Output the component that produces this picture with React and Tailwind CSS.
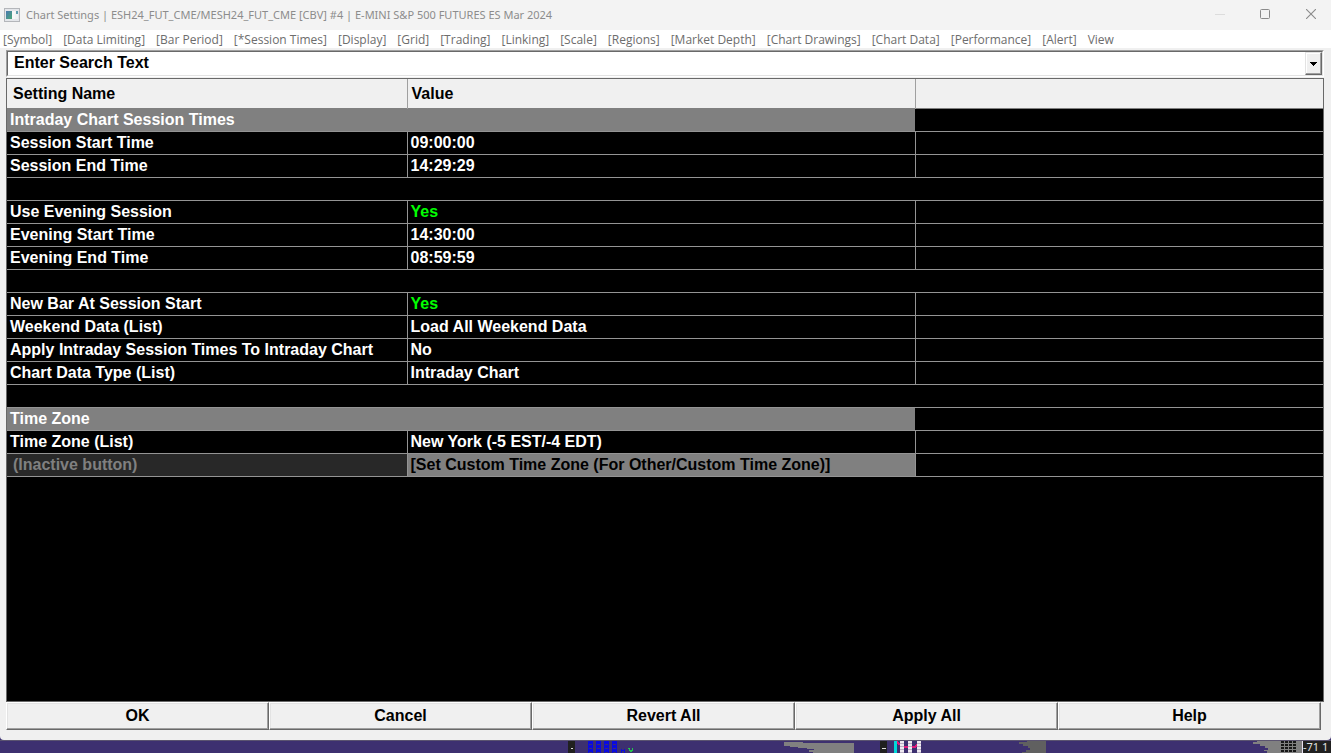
import React from "react";

const menuItems = [
  "[Symbol]",
  "[Data Limiting]",
  "[Bar Period]",
  "[*Session Times]",
  "[Display]",
  "[Grid]",
  "[Trading]",
  "[Linking]",
  "[Scale]",
  "[Regions]",
  "[Market Depth]",
  "[Chart Drawings]",
  "[Chart Data]",
  "[Performance]",
  "[Alert]",
  "View",
];

const rows = [
  { kind: "section", name: "Intraday Chart Session Times" },
  { kind: "setting", name: "Session Start Time", value: "09:00:00" },
  { kind: "setting", name: "Session End Time", value: "14:29:29" },
  { kind: "blank" },
  { kind: "setting", name: "Use Evening Session", value: "Yes" },
  { kind: "setting", name: "Evening Start Time", value: "14:30:00" },
  { kind: "setting", name: "Evening End Time", value: "08:59:59" },
  { kind: "blank" },
  { kind: "setting", name: "New Bar At Session Start", value: "Yes" },
  { kind: "setting", name: "Weekend Data (List)", value: "Load All Weekend Data" },
  { kind: "setting", name: "Apply Intraday Session Times To Intraday Chart", value: "No" },
  { kind: "setting", name: "Chart Data Type (List)", value: "Intraday Chart" },
  { kind: "blank" },
  { kind: "section", name: "Time Zone" },
  { kind: "setting", name: "Time Zone (List)", value: "New York (-5 EST/-4 EDT)" },
  {
    kind: "button",
    name: "(Inactive button)",
    value: "[Set Custom Time Zone (For Other/Custom Time Zone)]",
  },
];

const actions = ["OK", "Cancel", "Revert All", "Apply All", "Help"];

function AppIcon() {
  return (
    <svg width="16" height="14" viewBox="0 0 16 14" shapeRendering="crispEdges" aria-hidden="true">
      <defs>
        <linearGradient id="pane" x1="0" y1="0" x2="1" y2="1">
          <stop offset="0" stopColor="#4a78b0" />
          <stop offset="1" stopColor="#4aa878" />
        </linearGradient>
      </defs>
      <rect width="16" height="14" fill="#b4b6ba" />
      <rect x="1" y="1" width="14" height="12" fill="#e4e6ea" />
      <rect x="2" y="3" width="6" height="8" fill="url(#pane)" />
      <rect x="8" y="3" width="3" height="8" fill="#f8f8f8" />
      <rect x="11" y="3" width="3" height="8" fill="#f0f4f4" />
      <rect x="12" y="3" width="2" height="3" fill="#5f9fb0" />
    </svg>
  );
}

function TitleBar() {
  return (
    <header className="flex h-[30px] items-center justify-between bg-[#f3f3f3] pl-1">
      <div className="flex items-center gap-[6px]">
        <AppIcon />
        <h1 className="whitespace-nowrap font-['Noto_Sans','Open_Sans',sans-serif] text-[11px] leading-4 text-[#8c8c8c]">
          Chart Settings | ESH24_FUT_CME/MESH24_FUT_CME [CBV] #4 | E-MINI S&amp;P 500 FUTURES ES Mar
          2024
        </h1>
      </div>
      <div className="flex pb-[2px]">
        <button aria-label="Minimize" className="flex h-7 w-[38px] items-center justify-center">
          <svg width="10" height="10" viewBox="0 0 10 10" shapeRendering="crispEdges">
            <path d="M0 5.5h10" stroke="#dcdcdc" />
          </svg>
        </button>
        <button aria-label="Maximize" className="flex h-7 w-[52px] items-center justify-center">
          <svg width="10" height="10" viewBox="0 0 10 10" fill="none">
            <rect x="0.5" y="0.5" width="9" height="9" rx="1" stroke="#8a8a8a" />
          </svg>
        </button>
        <button aria-label="Close" className="flex h-7 w-[40px] items-center justify-center">
          <svg width="10" height="10" viewBox="0 0 10 10" fill="none">
            <path d="M0 0l10 10M10 0L0 10" stroke="#8a8a8a" strokeWidth="1.1" />
          </svg>
        </button>
      </div>
    </header>
  );
}

function MenuBar() {
  return (
    <nav className="flex h-[18px] gap-[11px] bg-white pt-[2px] pl-[3px] text-[12px] leading-4 text-[#6d6d6d]">
      {menuItems.map((item) => (
        <button key={item} className="whitespace-nowrap">
          {item}
        </button>
      ))}
    </nav>
  );
}

function SearchBox() {
  return (
    <div className="border border-t-[#a0a0a0] border-r-white border-b-white border-l-[#a0a0a0]">
      <div className="flex h-[25px] border border-t-[#696969] border-r-[#e3e3e3] border-b-[#e3e3e3] border-l-[#696969] bg-white">
        <input
          aria-label="Search settings"
          defaultValue="Enter Search Text"
          className="min-w-0 flex-1 px-[6px] pb-[2px] leading-5 text-black outline-none"
        />
        <button
          aria-label="Show search history"
          className="flex w-[17px] items-center justify-center border border-t-[#e3e3e3] border-r-[#696969] border-b-[#696969] border-l-[#e3e3e3] bg-[#f0f0f0] shadow-[inset_-1px_-1px_0_#a0a0a0,inset_1px_1px_0_#ffffff]"
        >
          <svg width="7" height="4" viewBox="0 0 7 4" shapeRendering="crispEdges">
            <path d="M0 0h7v1h-1v1h-1v1h-1v1h-1v-1h-1v-1h-1v-1h-1z" fill="#000" />
          </svg>
        </button>
      </div>
    </div>
  );
}

function SettingRow({ row }) {
  if (row.kind === "blank") {
    return (
      <tr className="h-[23px] border-b border-[#949494]">
        <td colSpan={3} />
      </tr>
    );
  }
  if (row.kind === "section") {
    return (
      <tr className="h-[23px] border-b border-[#949494]">
        <th colSpan={2} scope="rowgroup" className="bg-[#808080] pl-[3px] text-left text-white">
          {row.name}
        </th>
        <td />
      </tr>
    );
  }
  if (row.kind === "button") {
    return (
      <tr className="h-[23px] border-b border-[#949494]">
        <th
          scope="row"
          className="border-r border-[#949494] bg-[#282828] pl-[6px] text-left text-[#808080]"
        >
          {row.name}
        </th>
        <td className="border-r border-[#949494] bg-[#808080] pl-[3px]">
          <button className="block text-black">{row.value}</button>
        </td>
        <td />
      </tr>
    );
  }
  return (
    <tr className="h-[23px] border-b border-[#949494]">
      <th scope="row" className="border-r border-[#949494] pl-[3px] text-left text-white">
        {row.name}
      </th>
      <td
        className={
          row.value === "Yes"
            ? "border-r border-[#949494] pl-[3px] text-[#00ff00]"
            : "border-r border-[#949494] pl-[3px] text-white"
        }
      >
        {row.value}
      </td>
      <td />
    </tr>
  );
}

function SettingsTable() {
  return (
    <div className="flex-1 border border-[#696969] bg-black">
      <table className="w-full table-fixed border-collapse leading-[22px]">
        <colgroup>
          <col className="w-[400px]" />
          <col className="w-[508px]" />
          <col />
        </colgroup>
        <thead>
          <tr className="h-[29px] border-b border-[#808080] bg-[#f0f0f0] text-left text-black">
            <th scope="col" className="border-r border-[#a0a0a0] pt-[2px] pl-[6px]">
              Setting Name
            </th>
            <th scope="col" className="border-r border-[#a0a0a0] pt-[2px] pl-[4px]">
              Value
            </th>
            <td />
          </tr>
        </thead>
        <tbody>
          {rows.map((row, index) => (
            <SettingRow key={index} row={row} />
          ))}
        </tbody>
      </table>
    </div>
  );
}

function ActionBar() {
  return (
    <div className="mr-[3px] grid grid-cols-5">
      {actions.map((action) => (
        <button
          key={action}
          className="h-[28px] border border-t-white border-r-[#696969] border-b-[#696969] border-l-white bg-[#f0f0f0] leading-5 text-black shadow-[inset_-1px_-1px_0_#a0a0a0,inset_1px_1px_0_#e3e3e3]"
        >
          {action}
        </button>
      ))}
    </div>
  );
}

function BackgroundChart() {
  return (
    <div className="flex h-[13px] justify-end overflow-hidden border-t border-[#5b5470] bg-[#3d3070]">
      <svg
        width="743"
        height="12"
        viewBox="560 0 743 12"
        shapeRendering="crispEdges"
        className="shrink-0"
        aria-hidden="true"
      >
        <rect x="568" width="7" height="12" fill="#202020" />
        <rect x="571" y="7" width="2" height="1" fill="#dddddd" />
        <path
          d="M590.5 0v12M598.5 0v12M606.5 0v12M614.5 0v12"
          stroke="#0a0ae0"
          strokeWidth="4"
          strokeDasharray="3 1"
        />
        <path d="M588.5 0v12M592.5 0v12M596.5 0v12M600.5 0v12M604.5 0v12M608.5 0v12M612.5 0v12M616.5 0v12" stroke="#0a0ae0" />
        <path d="M621.5 8v4M624.5 8v4M621 9.5h4" stroke="#0a0ae0" />
        <path d="M628 7h2v2h1v2h-1v-1h-1v-2h-1zM633 7h-1v2h-1v2h1v-1h1z" fill="#22c84a" />
        <path d="M784 1h19v1h51v10h-41v-1h-4v-2h5v-1h-7v-1h-9v-1h-8v-1h-6z" fill="#808080" />
        <rect x="880" width="7" height="12" fill="#202020" />
        <rect x="882" y="7" width="4" height="1" fill="#dddddd" />
        <rect x="894" width="3" height="12" fill="#00d8d8" />
        <path d="M897 1l6 5h12l6-5" stroke="#e0187a" strokeWidth="2" fill="none" />
        <path
          d="M902 0v12M910 0v12M919 0v12"
          stroke="#b8aec4"
          strokeWidth="4"
        />
        <path
          d="M902 0v12M910 0v12M919 0v12"
          stroke="#eee8f0"
          strokeWidth="4"
          strokeDasharray="2 1"
        />
        <path d="M1019 1h8v-1h19v12h-24v-1h4v-2h4v-2h-2v-2h-5v-2h-4z" fill="#606060" />
        <path d="M1253 1h4v-1h45v12h-35v-2h-3v-1h4v-2h-3v-2h-5v-2h-7z" fill="#808080" />
        <path
          d="M1282 0v12M1286 0v12M1290 0v12M1294 0v12"
          stroke="#181818"
          strokeWidth="3"
          strokeDasharray="2 1"
        />
        <rect x="1302" width="1" height="12" fill="#e8e0f0" />
      </svg>
      <div className="w-[28px] shrink-0 whitespace-nowrap bg-[#202020] font-['Noto_Sans',sans-serif] text-[11px] leading-[12px] text-[#e0e0e0]">
        -71 1
      </div>
    </div>
  );
}

export default function App() {
  return (
    <div className="flex min-h-screen flex-col bg-[#3d3070] font-['Open_Sans','Noto_Sans',sans-serif]">
      <div className="flex flex-1 flex-col overflow-hidden rounded-b-[4px] bg-[#f0f0f0]">
        <TitleBar />
        <MenuBar />
        <main className="flex flex-1 flex-col pt-[2px] pr-[7px] pb-[10px] pl-[6px] font-['Liberation_Sans',Arial,sans-serif] text-[16px] font-bold">
          <SearchBox />
          <div className="mt-px flex flex-1 flex-col">
            <SettingsTable />
          </div>
          <ActionBar />
        </main>
      </div>
      <BackgroundChart />
    </div>
  );
}
